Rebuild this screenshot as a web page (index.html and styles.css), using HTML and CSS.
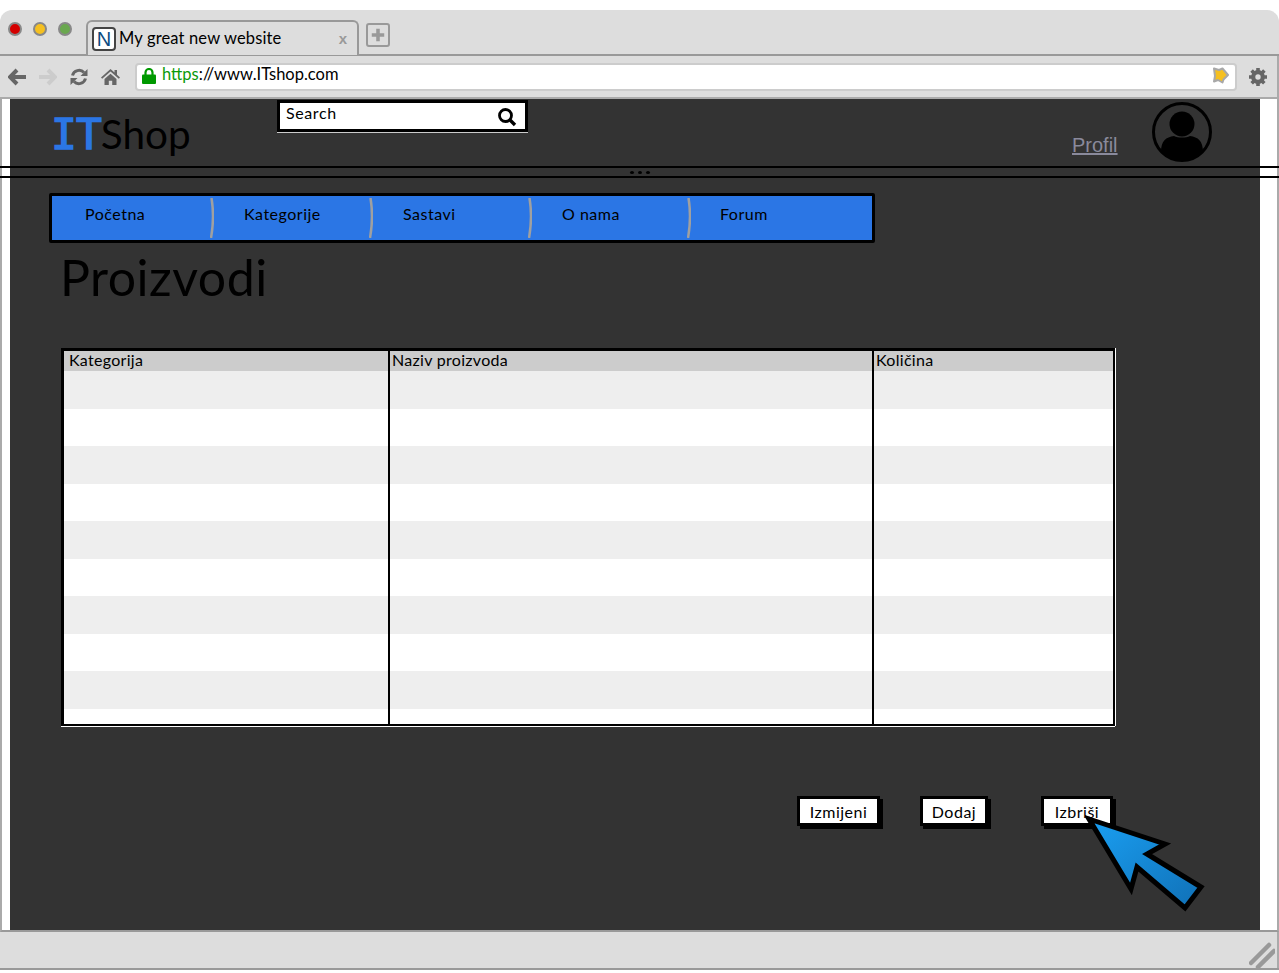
FILE: index.html
```html
<!DOCTYPE html>
<html lang="hr">
<head>
    <meta charset="UTF-8">
    <title>ITShop - Proizvodi</title>
    <link rel="stylesheet" href="styles.css">
</head>
<body>
    <div class="window">
        <div class="tabbar">
            <div class="lights">
                <span class="light red"></span>
                <span class="light yellow"></span>
                <span class="light green"></span>
            </div>
            <div class="tab">
                <span class="favicon">N</span>
                <span class="tab-title">My great new website</span>
                <span class="tab-close">x</span>
            </div>
            <div class="new-tab">
                <svg width="18" height="18" viewBox="0 0 18 18"><path d="M9 2v14M2 9h14" stroke="#999" stroke-width="4" fill="none"/></svg>
            </div>
        </div>
        <div class="toolbar">
            <svg class="tool" width="18" height="18" viewBox="0 0 18 18"><path d="M9 2L2 9l7 7M3 9h15" stroke="#666" stroke-width="4" fill="none"/></svg>
            <svg class="tool" width="18" height="18" viewBox="0 0 18 18"><path d="M9 2l7 7-7 7M15 9H0" stroke="#ccc" stroke-width="4" fill="none"/></svg>
            <svg class="tool" width="18" height="18" viewBox="0 0 18 18"><path d="M2.5 7.5A6.8 6.8 0 0 1 14 4.5M15.500 10.500A6.800 6.800 0 0 1 4 13.500" stroke="#666" stroke-width="3" fill="none"/><path d="M17.500 1v7h-7zM.5 17v-7h7z" fill="#666"/></svg>
            <svg class="tool" width="19" height="18" viewBox="0 0 19 18"><path d="M9.500 1L0 9.500l1.200 1.300L9.500 3.500l8.300 7.300L19 9.500l-3-2.700V2h-2.500v2.600zM3.500 11l6-5.200 6 5.200v6h-4.300v-4.300H7.800V17H3.500z" fill="#666"/></svg>
            <div class="urlbar">
                <svg class="lock" width="14" height="16" viewBox="0 0 14 16"><path d="M3.500 7V4.500a3.500 3.500 0 0 1 7 0V7" stroke="#090" stroke-width="2.200" fill="none"/><rect y="6.500" width="14" height="9.500" rx="1" fill="#090"/></svg>
                <span class="url"><span class="url-scheme">https</span>://www.ITshop.com</span>
                <svg class="star" width="17" height="17" viewBox="0 0 17 17"><path d="M2 1.500l5 1.500 3.500-1.500 5.500 6.500-4.500 4.500-1 3-4.500-2.500-4 1.500 1-5.500z" fill="#f5c020" stroke="#a8a8a8" stroke-width="2" stroke-linejoin="round"/></svg>
            </div>
            <svg class="gear" width="18" height="18" viewBox="0 0 18 18"><circle cx="9" cy="9" r="4.800" fill="none" stroke="#666" stroke-width="4.200"/><path d="M9 0v18M0 9h18M2.600 2.600l12.800 12.800M15.400 2.600L2.600 15.400" stroke="#666" stroke-width="3.600" stroke-dasharray="3.400 11.200 3.400"/></svg>
        </div>
        <div class="viewport">
            <div class="page">
                <header class="site-header">
                    <div class="logo"><span class="logo-it">IT</span>Shop</div>
                    <div class="search">
                        <span>Search</span>
                        <svg width="20" height="20" viewBox="0 0 20 20"><circle cx="8.500" cy="8.500" r="6" fill="none" stroke="#000" stroke-width="2.800"/><path d="M13 13l5 5" stroke="#000" stroke-width="3.400"/></svg>
                    </div>
                    <a class="profile-link" href="#">Profil</a>
                    <svg class="avatar" width="60" height="60" viewBox="0 0 60 60"><circle cx="30" cy="30" r="28.500" fill="none" stroke="#000" stroke-width="3"/><circle cx="30" cy="22" r="12.500"/><path d="M9 50c0-11 5-15 13-16 4 2 12 2 16 0 8 1 13 5 13 16-11 11-31 11-42 0z"/></svg>
                </header>
                <nav class="nav">
                    <a class="nav-item nav-first" href="#">Početna</a>
                    <svg class="nav-sep" width="4" height="40" viewBox="0 0 4 40"><path d="M1.500 0c2 12 2 26-.5 40" stroke="#a0a0a0" stroke-width="2.500" fill="none"/></svg>
                    <a class="nav-item" href="#">Kategorije</a>
                    <svg class="nav-sep" width="4" height="40" viewBox="0 0 4 40"><path d="M1.500 0c2 12 2 26-.5 40" stroke="#a0a0a0" stroke-width="2.500" fill="none"/></svg>
                    <a class="nav-item" href="#">Sastavi</a>
                    <svg class="nav-sep" width="4" height="40" viewBox="0 0 4 40"><path d="M1.500 0c2 12 2 26-.5 40" stroke="#a0a0a0" stroke-width="2.500" fill="none"/></svg>
                    <a class="nav-item" href="#">O nama</a>
                    <svg class="nav-sep" width="4" height="40" viewBox="0 0 4 40"><path d="M1.500 0c2 12 2 26-.5 40" stroke="#a0a0a0" stroke-width="2.500" fill="none"/></svg>
                    <a class="nav-item nav-last" href="#">Forum</a>
                </nav>
                <h1 class="title">Proizvodi</h1>
                <table class="products">
                    <thead>
                        <tr><th>Kategorija</th><th>Naziv proizvoda</th><th>Količina</th></tr>
                    </thead>
                    <tbody>
                        <tr><td></td><td></td><td></td></tr>
                        <tr><td></td><td></td><td></td></tr>
                        <tr><td></td><td></td><td></td></tr>
                        <tr><td></td><td></td><td></td></tr>
                        <tr><td></td><td></td><td></td></tr>
                        <tr><td></td><td></td><td></td></tr>
                        <tr><td></td><td></td><td></td></tr>
                        <tr><td></td><td></td><td></td></tr>
                        <tr><td></td><td></td><td></td></tr>
                        <tr class="row-short"><td></td><td></td><td></td></tr>
                    </tbody>
                </table>
                <div class="actions">
                    <button class="btn btn-edit">Izmijeni</button>
                    <button class="btn btn-add">Dodaj</button>
                    <button class="btn btn-delete">Izbriši</button>
                </div>
                <svg class="cursor" width="126" height="100" viewBox="0 0 126 100">
                    <defs>
                        <linearGradient id="cursorFill" x1="0" y1="0" x2="1" y2="1">
                            <stop offset="0" stop-color="#1a9ff2"/>
                            <stop offset="1" stop-color="#1070b6"/>
                        </linearGradient>
                    </defs>
                    <path d="M4 6L80 31 62 41 116 74 100 95 52 54 46 76z" fill="url(#cursorFill)" stroke="#000" stroke-width="5"/>
                </svg>
            </div>
            <div class="splitter"><span class="splitter-dots"></span></div>
        </div>
        <div class="statusbar">
            <svg width="26" height="26" viewBox="0 0 26 26"><path d="M2 21L20 3M9 25L25 9" stroke="#999" stroke-width="4.500" stroke-linecap="round"/></svg>
        </div>
    </div>
</body>
</html>
```

FILE: styles.css
```css
html, body {
    margin: 0;
    padding: 0;
    background-color: white;
}
body {
    font-family: Lato, "Open Sans", sans-serif;
    color: black;
    height: 973px;
    overflow: hidden;
}
.window {
    margin-top: 10px;
    height: 960px;
    display: flex;
    flex-direction: column;
    background-color: #dddddd;
    border-radius: 12px 12px 0 0;
    box-sizing: border-box;
    border-bottom: 2px solid #999999;
}

/* tab row */
.tabbar {
    height: 46px;
    box-sizing: border-box;
    border-bottom: 2px solid #999999;
    display: flex;
    align-items: flex-start;
    flex-shrink: 0;
}
.lights {
    display: flex;
    gap: 11px;
    padding: 12px 0 0 8px;
    width: 86px;
    box-sizing: border-box;
}
.light {
    width: 14px;
    height: 14px;
    box-sizing: border-box;
    border-radius: 50%;
    border: 2px solid #888888;
}
.red { background-color: #d40000; }
.yellow { background-color: #f5c020; }
.green { background-color: #6aa84f; }
.tab {
    margin-top: 10px;
    width: 273px;
    height: 35px;
    box-sizing: border-box;
    border: 2px solid #999999;
    border-bottom: none;
    border-radius: 6px 6px 0 0;
    background-color: #dddddd;
    display: flex;
    align-items: center;
    padding: 0 0 0 4px;
    margin-bottom: -2px;
}
.favicon {
    width: 24px;
    height: 24px;
    margin-top: 1px;
    box-sizing: border-box;
    border: 2px solid #444444;
    border-radius: 4px;
    background-color: white;
    color: #0b4a80;
    font-family: "Liberation Sans", sans-serif;
    font-size: 20px;
    line-height: 21px;
    text-align: center;
}
.tab-title {
    margin: -2px 0 0 3px;
    font-size: 16.500px;
    letter-spacing: 0.15px;
    white-space: nowrap;
}
.tab-close {
    margin-left: auto;
    margin-right: 10px;
    color: #999999;
    font-family: "Liberation Sans", sans-serif;
    font-weight: bold;
    font-size: 15px;
}
.new-tab {
    margin: 13px 0 0 7px;
    width: 24px;
    height: 24px;
    box-sizing: border-box;
    border: 2px solid #999999;
    border-radius: 3px;
    display: flex;
    align-items: center;
    justify-content: center;
}
.new-tab svg {
    width: 16px;
    height: 16px;
}

/* address row */
.toolbar {
    height: 43px;
    box-sizing: border-box;
    border-bottom: 2px solid #aaaaaa;
    border-right: 2px solid #aaaaaa;
    display: flex;
    align-items: center;
    flex-shrink: 0;
    padding: 0 10px 0 8px;
}
.tool {
    margin-right: 13px;
    flex-shrink: 0;
}
.urlbar {
    flex: 1;
    margin-left: 2px;
    height: 28px;
    box-sizing: border-box;
    border: 2px solid #cccccc;
    border-radius: 4px;
    background-color: white;
    display: flex;
    align-items: center;
    padding: 0 6px 2px 5px;
}
.lock {
    flex-shrink: 0;
}
.url {
    margin: -3px 0 0 6px;
    font-size: 16.500px;
    white-space: nowrap;
}
.url-scheme {
    color: #0a9a0a;
}
.star {
    margin-left: auto;
}
.gear {
    margin-left: 12px;
    flex-shrink: 0;
}

/* browser content */
.viewport {
    flex: 1;
    position: relative;
    background-color: white;
    border-left: 2px solid #aaaaaa;
    border-right: 2px solid #aaaaaa;
    border-bottom: 2px solid #999999;
    min-height: 0;
}
.page {
    position: relative;
    height: 100%;
    box-sizing: border-box;
    margin: 0 17px 0 8px;
    background-color: #333333;
}
.site-header {
    height: 94px;
    display: flex;
    align-items: flex-start;
    box-sizing: border-box;
}
.logo {
    width: 227px;
    margin: 9px 0 0 41px;
    font-size: 40.500px;
    line-height: 52px;
}
.logo-it {
    color: #2b76e5;
    font-family: "DejaVu Sans Mono", monospace;
    font-size: 43px;
    -webkit-text-stroke: 1.500px #2b76e5;
    letter-spacing: -1px;
}
.search {
    width: 251px;
    height: 32px;
    margin: 1px 0 0 -1px;
    box-sizing: border-box;
    border: 3px solid black;
    background-color: white;
    box-shadow: 0 1px 0 #cccccc;
    display: flex;
    align-items: center;
    justify-content: space-between;
    padding: 0 8px 8px 6px;
    font-size: 16px;
    letter-spacing: 0.6px;
}
.search svg {
    margin-top: 10px;
}
.profile-link {
    margin: 34px 0 0 544px;
    color: #8a8a9c;
    font-family: "Liberation Sans", sans-serif;
    font-size: 20px;
    line-height: 24px;
}
.avatar {
    margin: 3px 0 0 34px;
    flex-shrink: 0;
}
.nav {
    width: 826px;
    height: 50px;
    margin-left: 39px;
    box-sizing: border-box;
    border: 3px solid black;
    border-radius: 2px;
    background-color: #2b76e5;
    display: flex;
    align-items: center;
}
.nav-item {
    width: 155px;
    height: 39px;
    box-sizing: border-box;
    padding: 0 0 10px 30px;
    color: black;
    text-decoration: none;
    font-size: 16px;
    letter-spacing: 0.5px;
    display: flex;
    align-items: center;
}
.nav-first {
    width: 158px;
    padding-left: 33px;
}
.nav-last {
    padding-left: 29px;
}
.nav-sep {
    flex-shrink: 0;
}
.title {
    margin: 5px 0 0 50px;
    font-size: 50px;
    font-weight: normal;
    line-height: 58px;
    letter-spacing: 0.5px;
}
.products {
    margin: 42px 0 0 51px;
    width: 1054px;
    height: 376px;
    table-layout: fixed;
    border-collapse: separate;
    border-spacing: 0;
    background-color: white;
    border-top: 3px solid black;
    border-left: 3px solid black;
    border-right: 2px solid black;
    border-bottom: 2px solid black;
    box-shadow: 0 1px 0 white, 1px 0 0 white;
}
.products th {
    height: 20px;
    padding: 0 0 0 2px;
    background-color: #cccccc;
    font-size: 16px;
    font-weight: normal;
    line-height: 17px;
    letter-spacing: 0.3px;
    text-align: left;
    vertical-align: top;
    border-left: 2px solid black;
    overflow: hidden;
}
.products th:first-child {
    width: 319px;
    padding-left: 5px;
    border-left: none;
}
.products th:nth-child(2) {
    width: 480px;
}
.products td {
    height: 37.500px;
    padding: 0;
    border-left: 2px solid black;
}
.products td:first-child {
    border-left: none;
}
.products tbody tr:nth-child(odd) {
    background-color: #eeeeee;
}
.products .row-short td {
    height: 15px;
}
.actions {
    display: flex;
    gap: 40px;
    margin: 70px 0 0 787px;
}
.btn {
    height: 30px;
    padding: 2px 0 0;
    box-sizing: border-box;
    border: 3px solid black;
    background-color: white;
    box-shadow: 3px 3px 0 black;
    color: black;
    font-family: Lato, sans-serif;
    font-size: 16px;
    letter-spacing: 0.5px;
}
.btn-edit { width: 83px; }
.btn-add { width: 68px; }
.btn-delete {
    width: 72px;
    margin-left: 13px;
}
.cursor {
    position: absolute;
    left: 1075px;
    top: 714px;
}
.splitter {
    position: absolute;
    left: -2px;
    right: -2px;
    top: 67px;
    height: 12px;
    box-sizing: border-box;
    border-top: 2px solid black;
    border-bottom: 2px solid black;
    display: flex;
    justify-content: center;
    align-items: center;
}
.splitter-dots {
    width: 4px;
    height: 3px;
    background-color: black;
    border-radius: 50%;
    box-shadow: 8px 0 0 black, -8px 0 0 black;
}

/* bottom bar */
.statusbar {
    height: 36px;
    flex-shrink: 0;
    display: flex;
    justify-content: flex-end;
    align-items: flex-end;
    padding-right: 2px;
    border-right: 2px solid #aaaaaa;
    box-sizing: border-box;
}
```
